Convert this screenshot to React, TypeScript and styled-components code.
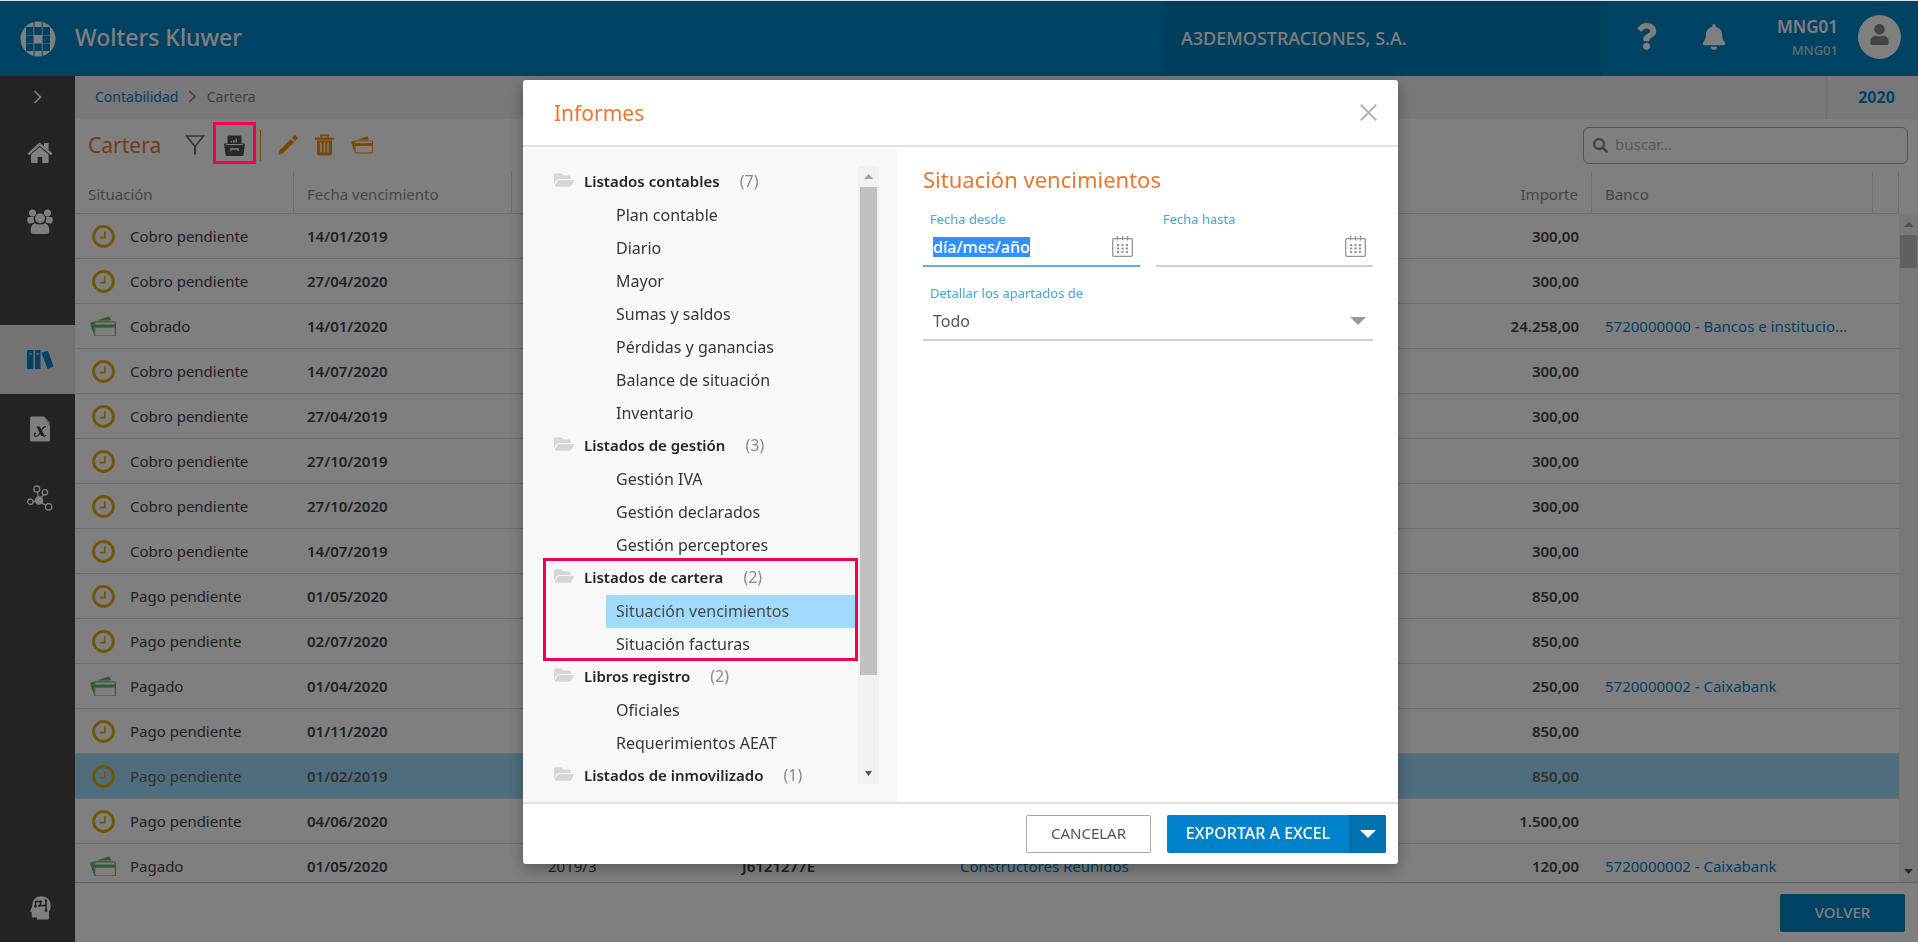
import React, { useEffect, useRef } from "react";
import styled, { createGlobalStyle, css } from "styled-components";
import { FaBell, FaFolderOpen, FaQuestion, FaSearch, FaUser } from "react-icons/fa";

const color = {
  brand: "#0084c6",
  brandDark: "#0072b1",
  link: "#0084c6",
  label: "#46a5da",
  orange: "#e87731",
  amber: "#f09000",
  gold: "#e6ac0a",
  green: "#6bb56f",
  selected: "#a0dafc",
  mark: "#f0004f",
  line: "#dedede",
  text: "#444444",
};

const GlobalStyle = createGlobalStyle`
  *, *::before, *::after { box-sizing: border-box; }
  body { margin: 0; background: #fff; }
  body, button, input, select {
    font-family: "Noto Sans", "Open Sans", "Liberation Sans", sans-serif;
    font-size: 15px;
    line-height: 20px;
    color: ${color.text};
  }
  button { padding: 0; border: 0; background: none; cursor: pointer; }
  ul { margin: 0; padding: 0; list-style: none; }
  a { color: ${color.link}; text-decoration: none; }
  svg { display: block; }
`;

/* ---------- page frame ---------- */

const Page = styled.div`
  display: flex;
  flex-direction: column;
  height: 100vh;
  overflow: hidden;
`;

const TopBar = styled.header`
  display: flex;
  flex: none;
  height: 76px;
  border-top: 1px solid #d9e2e6;
  background: ${color.brand};
  color: #fff;
`;

const LogoCell = styled.div`
  display: flex;
  align-items: center;
  justify-content: center;
  width: 75px;
`;

const BrandName = styled.div`
  flex: 1;
  font-size: 23px;
  font-weight: 500;
  line-height: 72px;
`;

const Company = styled.div`
  width: 440px;
  padding-left: 19px;
  background: #007cbd;
  color: #fdfdfd;
  font-size: 18px;
  font-weight: 500;
  line-height: 75px;
`;

const UserArea = styled.div`
  display: flex;
  align-items: center;
  width: 316px;
  padding: 0 17px 4px 10px;
`;

const TopButton = styled.button`
  display: flex;
  align-items: center;
  justify-content: center;
  width: 68px;
  height: 60px;
  color: #fff;
`;

const UserNames = styled.div`
  display: flex;
  flex: 1;
  flex-direction: column;
  align-items: flex-end;
  margin-right: 20px;
`;

const UserName = styled.strong`
  font-size: 17px;
  font-weight: 600;
  line-height: 26px;
`;

const UserCode = styled.span`
  color: #c3d4de;
  font-size: 13px;
  font-weight: 500;
  line-height: 20px;
`;

const Avatar = styled.div`
  display: flex;
  align-items: center;
  justify-content: center;
  width: 43px;
  height: 44px;
  padding-bottom: 4px;
  border-radius: 50%;
  background: #fff;
  color: #888;
`;

const Body = styled.div`
  display: flex;
  flex: 1;
  min-height: 0;
`;

const SideNav = styled.nav`
  display: flex;
  flex: none;
  flex-direction: column;
  width: 75px;
  background: #464646;
`;

const NavToggle = styled.button`
  display: flex;
  align-items: center;
  justify-content: center;
  height: 42px;
  color: #fff;
`;

const NavItem = styled.button<{ $active?: boolean; $spaced?: boolean; $last?: boolean }>`
  display: flex;
  align-items: center;
  justify-content: center;
  height: 69px;
  padding-left: 5px;
  color: ${(p) => (p.$active ? color.brand : "#fff")};
  background: ${(p) => (p.$active ? "#e6e6e6" : "transparent")};
  ${(p) => p.$spaced && css`margin-top: 69px;`}
  ${(p) => p.$last && css`margin-top: auto;`}
`;

const Content = styled.main`
  display: flex;
  flex: 1;
  flex-direction: column;
  min-width: 0;
`;

const CrumbBar = styled.div`
  display: flex;
  flex: none;
  height: 43px;
  background: #f0f0f0;
`;

const Crumbs = styled.nav`
  display: flex;
  flex: 1;
  align-items: center;
  gap: 10px;
  padding: 0 0 2px 20px;
  color: #808080;
  font-size: 14px;
`;

const Year = styled.button`
  width: 92px;
  padding: 0 0 2px 8px;
  border-left: 1px solid ${color.line};
  color: ${color.link};
  font-size: 16px;
  font-weight: 700;
`;

const Toolbar = styled.div`
  display: flex;
  flex: none;
  align-items: center;
  height: 52px;
  padding: 0 10px 0 13px;
`;

const PageTitle = styled.h1`
  margin: 0 15px 0 0;
  color: ${color.orange};
  font-size: 21px;
  font-weight: 400;
  line-height: 30px;
`;

const ToolButton = styled.button<{ $marked?: boolean }>`
  position: relative;
  display: flex;
  align-items: center;
  justify-content: center;
  width: ${(p) => (p.$marked ? 43 : 37)}px;
  height: 42px;
  ${(p) =>
    p.$marked &&
    css`
      &::after {
        content: "";
        position: absolute;
        inset: -2px 0 2px;
        z-index: 20;
        border: 3px solid ${color.mark};
      }
    `}
`;

const ToolDivider = styled.span`
  width: 1px;
  height: 31px;
  margin: 0 8px 0 4px;
  background: ${color.amber};
`;

const SearchBox = styled.label`
  display: flex;
  align-items: center;
  gap: 7px;
  width: 325px;
  height: 37px;
  margin-left: auto;
  padding: 0 9px;
  border: 1px solid #aaa;
  border-radius: 6px;
  color: #888;
`;

const SearchInput = styled.input`
  flex: 1;
  min-width: 0;
  padding: 0 0 2px;
  border: 0;
  outline: 0;
  background: none;
  &::placeholder { color: #b4b4b4; opacity: 1; }
`;

/* ---------- table ---------- */

const TableArea = styled.div`
  display: flex;
  flex: 1;
  min-height: 0;
  overflow: hidden;
`;

const TableClip = styled.div`
  flex: 1;
  min-width: 0;
  overflow: hidden;
`;

const Table = styled.table`
  width: 100%;
  border-spacing: 0;
  table-layout: fixed;
`;

const Col = styled.col<{ $w?: number }>`
  width: ${(p) => (p.$w ? `${p.$w}px` : "auto")};
`;

const HeadCell = styled.th<{ $right?: boolean }>`
  height: 43px;
  padding: 4px 13px 0;
  border-right: 1px solid ${color.line};
  border-bottom: 1px solid ${color.line};
  color: #8c8c8c;
  font-weight: 400;
  text-align: ${(p) => (p.$right ? "right" : "left")};
`;

const Row = styled.tr<{ $selected?: boolean }>`
  background: ${(p) => (p.$selected ? color.selected : "transparent")};
  color: ${(p) => (p.$selected ? "#626262" : color.text)};
`;

const Cell = styled.td<{ $right?: boolean; $bold?: boolean }>`
  height: 45px;
  padding: 0 13px;
  overflow: hidden;
  border-bottom: 1px solid ${color.line};
  font-weight: ${(p) => (p.$bold ? 600 : 400)};
  text-align: ${(p) => (p.$right ? "right" : "left")};
  white-space: nowrap;
`;

const Status = styled.div`
  display: flex;
  align-items: center;
  gap: 14px;
  margin-left: 2px;
`;

const StatusIcon = styled.span`
  display: flex;
  justify-content: center;
  width: 26px;
`;

const PageFooter = styled.footer`
  display: flex;
  flex: none;
  align-items: center;
  justify-content: flex-end;
  height: 60px;
  padding-right: 13px;
  border-top: 1px solid #c6c6c6;
`;

const PrimaryButton = styled.button`
  width: 125px;
  height: 38px;
  padding-bottom: 2px;
  border-radius: 2px;
  background: ${color.brand};
  color: #fff;
  font-weight: 500;
`;

/* ---------- scroll bars ---------- */

const Track = styled.div<{ $page?: boolean }>`
  display: flex;
  flex: none;
  flex-direction: column;
  align-items: center;
  width: ${(p) => (p.$page ? 19 : 21)}px;
  margin: ${(p) => (p.$page ? "43px 0 0" : "0 0 18px")};
  background: #f1f1f1;
`;

const Thumb = styled.div<{ $height: string }>`
  width: 17px;
  height: ${(p) => p.$height};
  background: #c1c1c1;
`;

const ArrowCell = styled.div<{ $down?: boolean }>`
  display: flex;
  align-items: center;
  justify-content: center;
  flex: none;
  height: 21px;
  margin-top: ${(p) => (p.$down ? "auto" : "0")};
`;

/* ---------- dialog ---------- */

const Scrim = styled.div`
  position: fixed;
  inset: 1px 0 0;
  z-index: 10;
  display: flex;
  justify-content: center;
  padding: 79px 20px 78px 23px;
  background: rgba(0, 0, 0, 0.5);
`;

const Dialog = styled.section`
  display: flex;
  flex-direction: column;
  width: 875px;
  overflow: hidden;
  border-radius: 3px;
  background: #fff;
  box-shadow: 0 5px 15px rgba(0, 0, 0, 0.3);
`;

const DialogHead = styled.header`
  display: flex;
  flex: none;
  align-items: center;
  justify-content: space-between;
  height: 67px;
  padding: 0 20px 0 31px;
  border-bottom: 2px solid #e2e2e2;
`;

const DialogTitle = styled.h2`
  margin: 0;
  color: ${color.orange};
  font-size: 21px;
  font-weight: 400;
  line-height: 30px;
`;

const CloseButton = styled.button`
  display: flex;
  align-items: center;
  justify-content: center;
  width: 20px;
  height: 20px;
`;

const DialogBody = styled.div`
  display: flex;
  flex: 1;
  min-height: 0;
`;

const TreePane = styled.div`
  display: flex;
  flex: none;
  width: 375px;
  padding: 19px 19px 0 0;
  background: #f8f8f8;
`;

const Tree = styled.ul`
  flex: 1;
  overflow: hidden;
`;

const TreeGroup = styled.li<{ $marked?: boolean }>`
  position: relative;
  ${(p) =>
    p.$marked &&
    css`
      &::after {
        content: "";
        position: absolute;
        inset: -4px 0 0 20px;
        border: 3px solid ${color.mark};
      }
    `}
`;

const GroupHead = styled.div`
  display: flex;
  align-items: center;
  height: 33px;
  padding: 0 0 3px 31px;
  color: #222629;
  font-weight: 600;
`;

const FolderMark = styled.span`
  width: 30px;
  padding-bottom: 2px;
  color: #d6d6d6;
  font-size: 20px;
`;

const Count = styled.span`
  margin-left: 20px;
  color: #8a8a8a;
  font-size: 16px;
  font-weight: 400;
`;

const TreeItem = styled.button<{ $selected?: boolean }>`
  display: block;
  width: 252px;
  height: 33px;
  margin-left: 83px;
  padding: 0 0 2px 10px;
  background: ${(p) => (p.$selected ? color.selected : "transparent")};
  color: ${(p) => (p.$selected ? "#4a4a4a" : "#33373a")};
  font-size: 16px;
  text-align: left;
`;

const FormPane = styled.form`
  flex: 1;
  min-width: 0;
  padding: 17px 25px;
`;

const FormTitle = styled.h3`
  margin: 0 0 14px;
  color: ${color.orange};
  font-size: 22px;
  font-weight: 400;
  line-height: 30px;
`;

const Fields = styled.div`
  display: grid;
  grid-template-columns: minmax(0, 1fr) minmax(0, 1fr);
  gap: 15px 16px;
`;

const Field = styled.div<{ $full?: boolean }>`
  grid-column: ${(p) => (p.$full ? "1 / -1" : "auto")};
`;

const FieldLabel = styled.label`
  display: block;
  padding-left: 7px;
  color: ${color.label};
  font-size: 13px;
  line-height: 22px;
`;

const Control = styled.div<{ $active?: boolean }>`
  display: flex;
  align-items: center;
  height: 37px;
  padding: 0 7px 2px 10px;
  border-bottom: 2px solid ${(p) => (p.$active ? "#5fb0dd" : "#cfcfcf")};
`;

const DateInput = styled.input`
  flex: 1;
  min-width: 0;
  padding: 0;
  border: 0;
  outline: 0;
  background: none;
  font-size: 16px;
  font-weight: 500;
  &::selection { background: #3390ff; color: #fff; }
`;

const Select = styled.select`
  flex: 1;
  padding: 0;
  border: 0;
  outline: 0;
  appearance: none;
  background: none;
  color: #555;
  font-size: 16px;
`;

const DialogFoot = styled.footer`
  display: flex;
  flex: none;
  align-items: center;
  justify-content: flex-end;
  gap: 16px;
  height: 62px;
  padding-right: 12px;
  border-top: 2px solid #e2e2e2;
`;

const CancelButton = styled.button`
  width: 125px;
  height: 38px;
  padding-bottom: 2px;
  border: 1px solid #a6a6a6;
  border-radius: 2px;
  color: #555;
`;

const SplitButton = styled.div`
  display: flex;
  height: 38px;
  overflow: hidden;
  border-radius: 2px;
  background: #0082ca;
`;

const ExportButton = styled.button`
  width: 182px;
  padding-bottom: 2px;
  color: #fff;
  font-size: 16px;
  font-weight: 500;
`;

const ExportMenu = styled.button`
  display: flex;
  align-items: center;
  justify-content: center;
  width: 37px;
  border-left: 1px solid #006aa8;
  background: ${color.brandDark};
`;

/* ---------- drawings ---------- */

const Logo = () => (
  <svg width="36" height="36" viewBox="0 0 36 36">
    <circle cx="18" cy="18" r="17.500" fill="#fff" />
    <path d="M6 6h7.500v8H6zM14.300 6h7.500v8h-7.500zM22.500 6H30v8h-7.500zM6 14.500h7.500v7.500H6zM22.500 14.500H30V22h-7.500zM6 22.500h7.500V30H6zM14.300 22.500h7.500V30h-7.500zM22.500 22.500H30V30h-7.500z" fill={color.brand} />
    <path d="M14 1v5M22.200 1v5M14 30v5M22.200 30v5" stroke={color.brand} strokeWidth="1" />
  </svg>
);

const Chevron = ({ size = 14 }: { size?: number }) => (
  <svg width={(size * 9) / 14} height={size} viewBox="0 0 9 14" fill="none" stroke="currentColor" strokeWidth="1.700">
    <path d="M1.500 1l6 6-6 6" />
  </svg>
);

const HomeIcon = () => (
  <svg width="26" height="22" viewBox="0 0 26 22" fill="currentColor">
    <path d="M1.300 12.300L12.500 2.200 24.700 12.300" fill="none" stroke="currentColor" strokeWidth="2.400" />
    <path d="M17 1h4.600v7.200L17 4.400zM12.600 5l9 7.600V20q0 1-1 1h-5.400v-6h-4.600v6H5q-1 0-1-1v-7.400z" />
  </svg>
);

const PeopleIcon = () => (
  <svg width="26" height="26" viewBox="0 0 26 26" fill="currentColor">
    <circle cx="5.500" cy="4" r="3.500" />
    <circle cx="20.500" cy="4" r="3.500" />
    <path d="M1.800 8h5Q6 10 7.400 13.800L2 14.600Q.2 14 .2 11T1.800 8zM24.200 8h-5q.8 2-.6 5.800l5.400.8q1.800-.6 1.800-3.600t-1.600-3z" />
    <circle cx="13" cy="9.300" r="4.900" />
    <path d="M8 14.200q5 2.400 10 0 4.200 1 4.200 6.800v1.500Q22 25 19.500 25h-13Q4 25 3.800 22.500V21q0-5.800 4.200-6.800z" />
  </svg>
);

const BooksIcon = () => (
  <svg width="27" height="19" viewBox="0 0 27 19">
    <path d="M1 0h5.500v19H1q-1 0-1-1V1q0-1 1-1zM8 0h5.500v19H8zM14.500 2.800L20 1q1 0 1.300.8L26.500 16.600 20.600 19z" fill="currentColor" />
    <path d="M2 4h3M9.300 4h3" stroke="#fff" strokeWidth="1.200" />
  </svg>
);

const SheetIcon = () => (
  <svg width="20" height="26" viewBox="0 0 20 26">
    <path d="M1.500.5H14L20 7v17q0 1.500-1.500 1.500h-17Q0 25.500 0 24V2Q0 .5 1.500.5z" fill="#fff" />
    <path d="M14 .5L20 7v4z" fill="#b8b8b8" />
    <path d="M6.500 10.500h3.200l5 9.500h-3.400z" fill="#3c3c3c" />
    <path d="M16 10.500q-2.500 0-4 3l-3 5q-2 2.500-4 1.500-1.500-1.500.5-3.500M13.500 20.500q1.500 0 2.500-1.500" fill="none" stroke="#3c3c3c" strokeWidth="1.200" />
  </svg>
);

const NetworkIcon = () => (
  <svg width="26" height="26" viewBox="0 0 26 26" fill="none" stroke="#fff" strokeWidth="1.300">
    <path d="M10.500 7L12 16l4.300-6.200M6 16.500h6l7.500 4.200" />
    <circle cx="9.800" cy="4" r="3" />
    <circle cx="17.900" cy="7.300" r="2.700" />
    <circle cx="3.400" cy="16.700" r="2.700" />
    <circle cx="21.600" cy="21.900" r="3.200" />
    <circle cx="12" cy="15.500" r="3.600" fill="#fff" />
  </svg>
);

const HeadIcon = () => (
  <svg width="21" height="24" viewBox="0 0 21 24">
    <path d="M11 .3Q20.600.5 20.700 10q0 3.500-1.700 5.500v8H7v-2H3q-1.200 0-1.200-1.500v-3.500L0 15.500l2-4.500Q2 .5 11 .3z" fill="#fff" />
    <path d="M9.500 5.500H5.500v5M9.500 9.500h6.500M10.500 5.500V9M16 4v11" fill="none" stroke="#3c3c3c" strokeWidth="1.500" />
    <g fill="#3c3c3c"><circle cx="10.500" cy="5.500" r="1.300" /><circle cx="5.500" cy="10.500" r="1.300" /><circle cx="9.500" cy="9.700" r="1.300" /><circle cx="16" cy="4.800" r="1.300" /><circle cx="16" cy="14.500" r="1.400" /></g>
  </svg>
);

const FunnelIcon = () => (
  <svg width="20" height="20" viewBox="0 0 20 20" fill="none" stroke="#6a6a6a" strokeWidth="1.600">
    <path d="M10 11.500L1.500 1h17z" />
    <path d="M10 11v8.500" strokeWidth="2" />
  </svg>
);

const CabinetIcon = () => (
  <svg width="21" height="21" viewBox="0 0 21 21">
    <path d="M4.500.5h12q1 0 1 1V9h-14V1.500q0-1 1-1zM0 8.500h3.500L3 10h15l-.5-1.500H21L19.500 20q-.2 1-1.200 1H2.800q-1 0-1.200-1z" fill="#505050" />
    <path d="M2 9.600h17" stroke="#fff" strokeWidth=".9" />
    <path d="M7.500 7.500V6M9.800 7.500V5M12.200 7.500V3.500" stroke="#fff" strokeWidth="1.300" />
    <path d="M6.800 16v-2h7.400v2" fill="none" stroke="#fff" strokeWidth="1.300" />
  </svg>
);

const PencilIcon = () => (
  <svg width="20" height="20" viewBox="0 0 20 20" fill={color.amber}>
    <path d="M12.800 4l3.200 3.200L4.600 18.400.3 19.700l1.400-4.500zM14 2.800L16.200.6q.7-.6 1.400 0l1.800 1.800q.7.700 0 1.400L17.200 6z" />
  </svg>
);

const TrashIcon = () => (
  <svg width="19" height="22" viewBox="0 0 19 22">
    <path d="M0 3.500h19v2.200H0zM2 6.500h15v13q0 2-2 2H4q-2 0-2-2z" fill={color.amber} />
    <path d="M6 4V1.300h7V4" fill="none" stroke={color.amber} strokeWidth="1.700" />
    <path d="M6 8.500v10M9.500 8.500v10M13 8.500v10" stroke="#fff" strokeWidth="1.500" />
  </svg>
);

const CardsIcon = ({ tint, width = 22 }: { tint: string; width?: number }) => (
  <svg width={width} height={(width * 20) / 25} viewBox="0 0 25 20">
    <path d="M0 6.500L18.500.3l2 4H5.500Q4 4.500 4 6v12L2.300 14z" fill={tint} />
    <rect x="4.600" y="5.600" width="19.800" height="13.700" rx="1" fill="none" stroke={tint} strokeWidth="1.100" />
    <path d="M4.600 8.200h19.800v3H4.600z" fill={tint} />
  </svg>
);

const ClockIcon = () => (
  <svg width="23" height="23" viewBox="0 0 22 22" fill="none" stroke={color.gold}>
    <circle cx="11" cy="11" r="9.500" strokeWidth="2.800" />
    <path d="M12.300 6v6H7.500" strokeWidth="1.700" />
  </svg>
);

const CrossIcon = () => (
  <svg width="17" height="17" viewBox="0 0 17 17" fill="none" stroke="#b4b4b4" strokeWidth="2">
    <path d="M.8.8l15.400 15.400M16.200.8L.8 16.200" />
  </svg>
);

const CalendarIcon = () => (
  <svg width="21" height="21" viewBox="0 0 21 21" fill="none" stroke="#949494">
    <rect x=".7" y="2.700" width="19.600" height="17.600" rx="1" strokeWidth="1.300" />
    <path d="M5.500 0v4.500M10.500 0v4.500M15.500 0v4.500" strokeWidth="1.300" />
    <path d="M5 9h2.200M9.400 9h2.200M13.800 9H16M5 12.500h2.200M9.400 12.500h2.200M13.800 12.500H16M5 16h2.200M9.400 16h2.200M13.800 16H16" strokeWidth="1.800" />
  </svg>
);

const Triangle = ({ w, h, fill, up }: { w: number; h: number; fill: string; up?: boolean }) => (
  <svg width={w} height={h} viewBox="0 0 10 5" preserveAspectRatio="none">
    <path d={up ? "M0 5L5 0l5 5z" : "M0 0h10L5 5z"} fill={fill} />
  </svg>
);

/* ---------- data ---------- */

type Entry = {
  status: string;
  due: string;
  amount: string;
  bank?: string;
  selected?: boolean;
  invoice?: string;
  taxId?: string;
  partner?: string;
};

const entries: Entry[] = [
  { status: "Cobro pendiente", due: "14/01/2019", amount: "300,00" },
  { status: "Cobro pendiente", due: "27/04/2020", amount: "300,00" },
  { status: "Cobrado", due: "14/01/2020", amount: "24.258,00", bank: "5720000000 - Bancos e institucio..." },
  { status: "Cobro pendiente", due: "14/07/2020", amount: "300,00" },
  { status: "Cobro pendiente", due: "27/04/2019", amount: "300,00" },
  { status: "Cobro pendiente", due: "27/10/2019", amount: "300,00" },
  { status: "Cobro pendiente", due: "27/10/2020", amount: "300,00" },
  { status: "Cobro pendiente", due: "14/07/2019", amount: "300,00" },
  { status: "Pago pendiente", due: "01/05/2020", amount: "850,00" },
  { status: "Pago pendiente", due: "02/07/2020", amount: "850,00" },
  { status: "Pagado", due: "01/04/2020", amount: "250,00", bank: "5720000002 - Caixabank" },
  { status: "Pago pendiente", due: "01/11/2020", amount: "850,00" },
  { status: "Pago pendiente", due: "01/02/2019", amount: "850,00", selected: true },
  { status: "Pago pendiente", due: "04/06/2020", amount: "1.500,00" },
  {
    status: "Pagado",
    due: "01/05/2020",
    amount: "120,00",
    bank: "5720000002 - Caixabank",
    invoice: "2019/3",
    taxId: "J6121277E",
    partner: "Constructores Reunidos",
  },
];

const groups = [
  {
    name: "Listados contables",
    count: 7,
    items: ["Plan contable", "Diario", "Mayor", "Sumas y saldos", "Pérdidas y ganancias", "Balance de situación", "Inventario"],
  },
  { name: "Listados de gestión", count: 3, items: ["Gestión IVA", "Gestión declarados", "Gestión perceptores"] },
  { name: "Listados de cartera", count: 2, items: ["Situación vencimientos", "Situación facturas"], marked: true },
  { name: "Libros registro", count: 2, items: ["Oficiales", "Requerimientos AEAT"] },
  { name: "Listados de inmovilizado", count: 1, items: [] as string[] },
];

const columnWidths = [219, 218, 23, 194, 218, undefined, 200, 281, 26];

/* ---------- sections ---------- */

function Header() {
  return (
    <TopBar>
      <LogoCell><Logo /></LogoCell>
      <BrandName>Wolters Kluwer</BrandName>
      <Company>A3DEMOSTRACIONES, S.A.</Company>
      <UserArea>
        <TopButton aria-label="Ayuda"><FaQuestion size={27} /></TopButton>
        <TopButton aria-label="Notificaciones"><FaBell size={26} /></TopButton>
        <UserNames>
          <UserName>MNG01</UserName>
          <UserCode>MNG01</UserCode>
        </UserNames>
        <Avatar><FaUser size={21} /></Avatar>
      </UserArea>
    </TopBar>
  );
}

function Navigation() {
  return (
    <SideNav aria-label="Principal">
      <NavToggle aria-label="Desplegar"><Chevron /></NavToggle>
      <NavItem aria-label="Inicio"><HomeIcon /></NavItem>
      <NavItem aria-label="Clientes"><PeopleIcon /></NavItem>
      <NavItem $active $spaced aria-label="Contabilidad"><BooksIcon /></NavItem>
      <NavItem aria-label="Excel"><SheetIcon /></NavItem>
      <NavItem aria-label="Conexiones"><NetworkIcon /></NavItem>
      <NavItem $last aria-label="Asistente"><HeadIcon /></NavItem>
    </SideNav>
  );
}

function EntriesTable() {
  return (
    <TableArea>
      <TableClip>
        <Table>
          <colgroup>{columnWidths.map((w, i) => <Col key={i} $w={w} />)}</colgroup>
          <thead>
            <tr>
              <HeadCell>Situación</HeadCell>
              <HeadCell>Fecha vencimiento</HeadCell>
              <HeadCell />
              <HeadCell />
              <HeadCell />
              <HeadCell />
              <HeadCell $right>Importe</HeadCell>
              <HeadCell>Banco</HeadCell>
              <HeadCell />
            </tr>
          </thead>
          <tbody>
            {entries.map((e, i) => (
              <Row key={i} $selected={e.selected}>
                <Cell>
                  <Status>
                    <StatusIcon>
                      {e.status.endsWith("pendiente") ? <ClockIcon /> : <CardsIcon tint={color.green} width={26} />}
                    </StatusIcon>
                    {e.status}
                  </Status>
                </Cell>
                <Cell $bold>{e.due}</Cell>
                <Cell />
                <Cell>{e.invoice}</Cell>
                <Cell $bold>{e.taxId}</Cell>
                <Cell>{e.partner && <a href="#cliente">{e.partner}</a>}</Cell>
                <Cell $bold $right>{e.amount}</Cell>
                <Cell>{e.bank && <a href="#banco">{e.bank}</a>}</Cell>
                <Cell />
              </Row>
            ))}
          </tbody>
        </Table>
      </TableClip>
      <Track $page>
        <ArrowCell><Triangle w={10} h={5} fill="#a0a0a0" up /></ArrowCell>
        <Thumb $height="33px" />
        <ArrowCell $down><Triangle w={9} h={5} fill="#505050" /></ArrowCell>
      </Track>
    </TableArea>
  );
}

function ReportTree() {
  return (
    <TreePane>
      <Tree>
        {groups.map((g) => (
          <TreeGroup key={g.name} $marked={g.marked}>
            <GroupHead>
              <FolderMark><FaFolderOpen /></FolderMark>
              {g.name}
              <Count>({g.count})</Count>
            </GroupHead>
            {g.items.map((item) => (
              <TreeItem key={item} $selected={item === "Situación vencimientos"}>{item}</TreeItem>
            ))}
          </TreeGroup>
        ))}
      </Tree>
      <Track>
        <ArrowCell><Triangle w={9} h={5} fill="#a0a0a0" up /></ArrowCell>
        <Thumb $height="79%" />
        <ArrowCell $down><Triangle w={7} h={5} fill="#505050" /></ArrowCell>
      </Track>
    </TreePane>
  );
}

function ReportForm() {
  const from = useRef<HTMLInputElement>(null);
  useEffect(() => {
    from.current?.focus();
    from.current?.select();
  }, []);
  return (
    <FormPane>
      <FormTitle>Situación vencimientos</FormTitle>
      <Fields>
        <Field>
          <FieldLabel htmlFor="from">Fecha desde</FieldLabel>
          <Control $active>
            <DateInput id="from" ref={from} defaultValue="día/mes/año" />
            <CalendarIcon />
          </Control>
        </Field>
        <Field>
          <FieldLabel htmlFor="to">Fecha hasta</FieldLabel>
          <Control>
            <DateInput id="to" />
            <CalendarIcon />
          </Control>
        </Field>
        <Field $full>
          <FieldLabel htmlFor="detail">Detallar los apartados de</FieldLabel>
          <Control>
            <Select id="detail"><option>Todo</option></Select>
            <Triangle w={16} h={8} fill="#999" />
          </Control>
        </Field>
      </Fields>
    </FormPane>
  );
}

export default function App() {
  return (
    <>
      <GlobalStyle />
      <Page>
        <Header />
        <Body>
          <Navigation />
          <Content>
            <CrumbBar>
              <Crumbs aria-label="Ruta">
                <a href="#contabilidad">Contabilidad</a>
                <Chevron size={13} />
                <span>Cartera</span>
              </Crumbs>
              <Year>2020</Year>
            </CrumbBar>
            <Toolbar>
              <PageTitle>Cartera</PageTitle>
              <ToolButton aria-label="Filtrar"><FunnelIcon /></ToolButton>
              <ToolButton $marked aria-label="Informes"><CabinetIcon /></ToolButton>
              <ToolDivider />
              <ToolButton aria-label="Editar"><PencilIcon /></ToolButton>
              <ToolButton aria-label="Eliminar"><TrashIcon /></ToolButton>
              <ToolButton aria-label="Cobrar"><CardsIcon tint={color.amber} /></ToolButton>
              <SearchBox>
                <FaSearch size={15} />
                <SearchInput placeholder="buscar..." aria-label="Buscar" />
              </SearchBox>
            </Toolbar>
            <EntriesTable />
            <PageFooter><PrimaryButton>VOLVER</PrimaryButton></PageFooter>
          </Content>
        </Body>
      </Page>
      <Scrim>
        <Dialog role="dialog" aria-labelledby="dialog-title">
          <DialogHead>
            <DialogTitle id="dialog-title">Informes</DialogTitle>
            <CloseButton aria-label="Cerrar"><CrossIcon /></CloseButton>
          </DialogHead>
          <DialogBody>
            <ReportTree />
            <ReportForm />
          </DialogBody>
          <DialogFoot>
            <CancelButton>CANCELAR</CancelButton>
            <SplitButton>
              <ExportButton>EXPORTAR A EXCEL</ExportButton>
              <ExportMenu aria-label="Más formatos"><Triangle w={16} h={8} fill="#fff" /></ExportMenu>
            </SplitButton>
          </DialogFoot>
        </Dialog>
      </Scrim>
    </>
  );
}
